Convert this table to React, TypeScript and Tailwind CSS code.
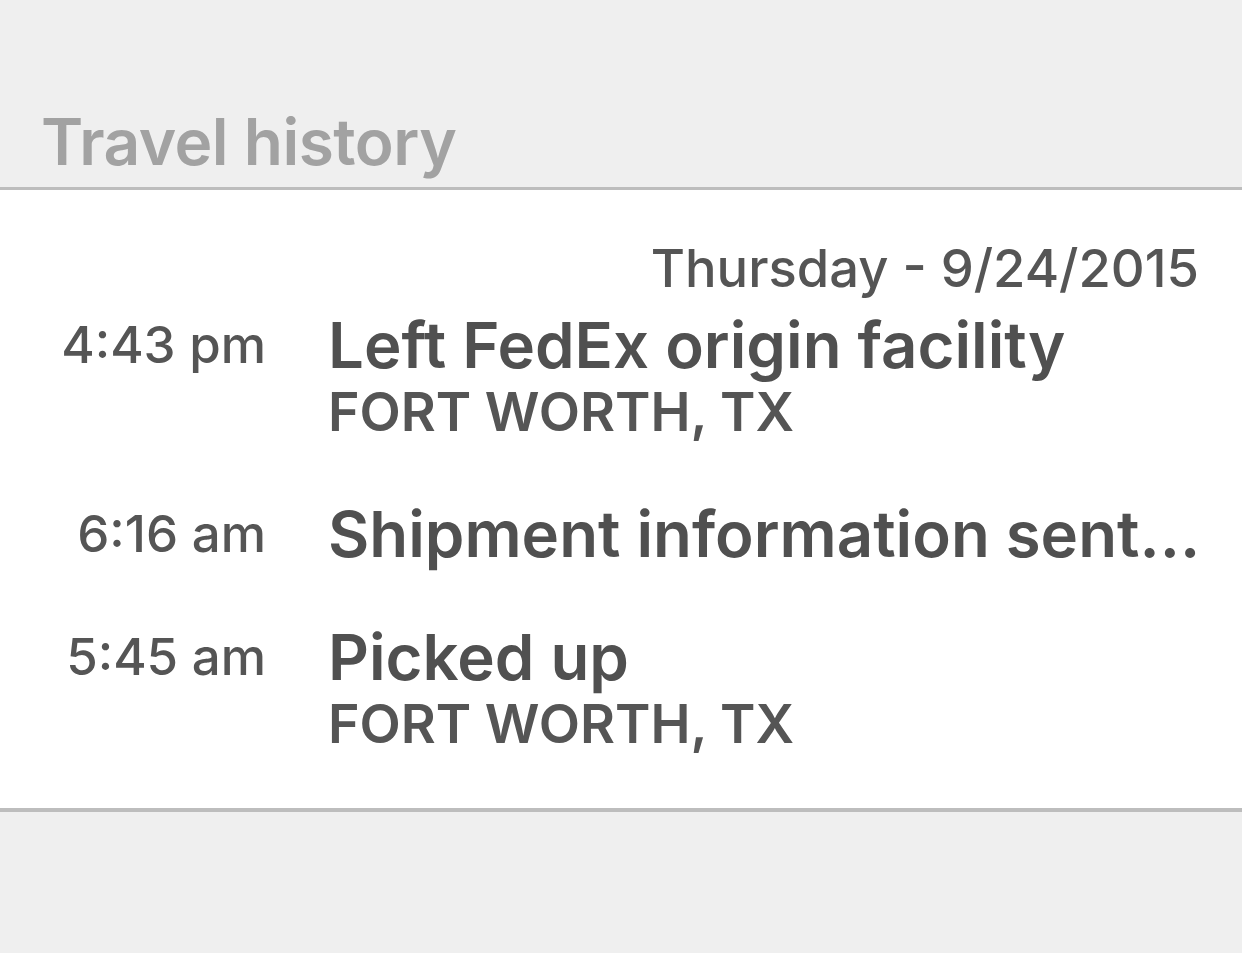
const events = [
  { time: "4:43 pm", title: "Left FedEx origin facility", place: "FORT WORTH, TX" },
  { time: "6:16 am", title: "Shipment information sent...", place: "" },
  { time: "5:45 am", title: "Picked up", place: "FORT WORTH, TX" },
];

export default function App() {
  return (
    <div className="w-[1242px] h-[953px] bg-[#efefef] flex flex-col font-['Inter',sans-serif] overflow-hidden">
      {/* Section header */}
      <div className="h-[190px] px-[41px] pt-[106px] border-b-[3px] border-[#bdbdbd]">
        <h2 className="text-[64px] leading-[72px] font-semibold text-[#a2a2a2] tracking-[-0.5px]">
          Travel history
        </h2>
      </div>

      {/* History list */}
      <div className="bg-white border-b-[4px] border-[#bdbdbd] pt-[48px]">
        <div className="pr-[43px] mb-[16px] text-right text-[52.5px] leading-[60px] font-medium text-[#555555]">
          Thursday - 9/24/2015
        </div>
        <ul className="flex flex-col">
          {events.map((e, i) => (
            <li key={i} className="flex items-start pb-[61px] last:pb-[54px]">
              <span className="w-[266px] shrink-0 text-right text-[51px] leading-[62px] font-medium text-[#555555]">
                {e.time}
              </span>
              <div className="flex flex-col ml-[62px] min-w-0 pr-[40px]">
                <span className="text-[63.5px] leading-[62px] font-semibold text-[#505050] whitespace-nowrap">
                  {e.title}
                </span>
                {e.place && (
                  <span className="mt-[6px] text-[53.7px] leading-[60px] font-semibold text-[#555555] whitespace-nowrap">
                    {e.place}
                  </span>
                )}
              </div>
            </li>
          ))}
        </ul>
      </div>
    </div>
  );
}
